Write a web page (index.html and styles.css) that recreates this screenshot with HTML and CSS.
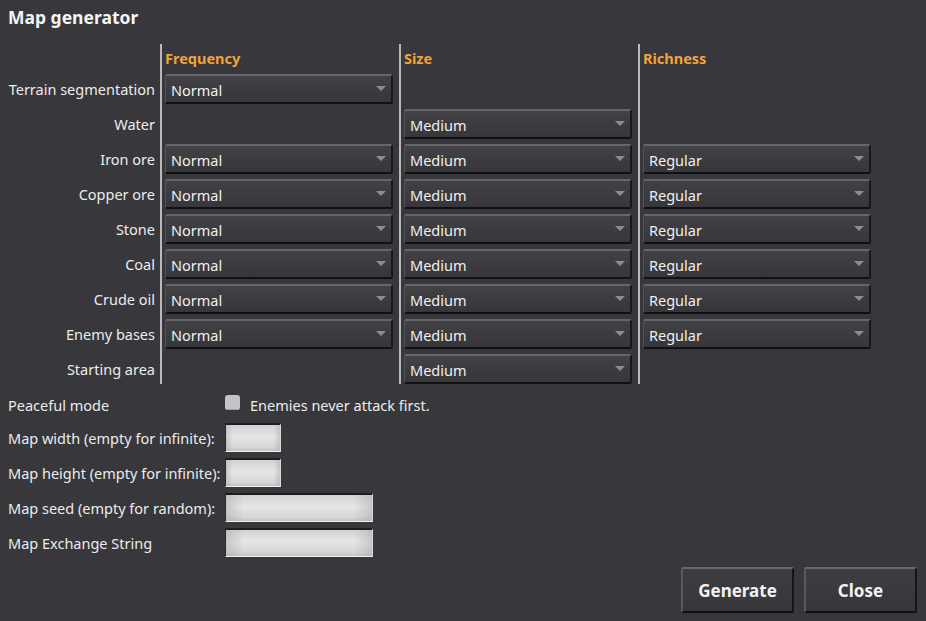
FILE: index.html
```html
<!DOCTYPE html>
<html>
<head>
<meta charset="utf-8">
<link rel="stylesheet" href="styles.css">
</head>
<body>
<div class="window">
  <h1 class="title">Map generator</h1>
  <div class="table">
    <div class="labels">
      <div class="head"></div>
      <div class="lab">Terrain segmentation</div>
      <div class="lab">Water</div>
      <div class="lab">Iron ore</div>
      <div class="lab">Copper ore</div>
      <div class="lab">Stone</div>
      <div class="lab">Coal</div>
      <div class="lab">Crude oil</div>
      <div class="lab">Enemy bases</div>
      <div class="lab">Starting area</div>
    </div>
    <div class="col">
      <div class="head">Frequency</div>
      <div class="dd">Normal</div>
      <div class="empty"></div>
      <div class="dd">Normal</div>
      <div class="dd">Normal</div>
      <div class="dd">Normal</div>
      <div class="dd">Normal</div>
      <div class="dd">Normal</div>
      <div class="dd">Normal</div>
      <div class="empty"></div>
    </div>
    <div class="col">
      <div class="head">Size</div>
      <div class="empty"></div>
      <div class="dd">Medium</div>
      <div class="dd">Medium</div>
      <div class="dd">Medium</div>
      <div class="dd">Medium</div>
      <div class="dd">Medium</div>
      <div class="dd">Medium</div>
      <div class="dd">Medium</div>
      <div class="dd">Medium</div>
    </div>
    <div class="col">
      <div class="head">Richness</div>
      <div class="empty"></div>
      <div class="empty"></div>
      <div class="dd">Regular</div>
      <div class="dd">Regular</div>
      <div class="dd">Regular</div>
      <div class="dd">Regular</div>
      <div class="dd">Regular</div>
      <div class="dd">Regular</div>
      <div class="empty"></div>
    </div>
  </div>

  <div class="form">
    <div class="flab first">Peaceful mode</div>
    <div class="check-row"><span class="checkbox"></span><span class="ctext">Enemies never attack first.</span></div>
    <div class="flab">Map width (empty for infinite):</div>
    <div><div class="input short"></div></div>
    <div class="flab">Map height (empty for infinite):</div>
    <div><div class="input short"></div></div>
    <div class="flab">Map seed (empty for random):</div>
    <div><div class="input long"></div></div>
    <div class="flab">Map Exchange String</div>
    <div><div class="input long"></div></div>
  </div>

  <div class="buttons">
    <button class="btn">Generate</button>
    <button class="btn">Close</button>
  </div>
</div>
</body>
</html>
```

FILE: styles.css
```css
html, body {
  margin: 0;
  padding: 0;
  background: #38373b;
}
body {
  font-family: "Noto Sans", "Open Sans", sans-serif;
  font-size: 14.5px;
  color: #ececec;
  width: 926px;
  height: 621px;
  overflow: hidden;
}
.window {
  height: 621px;
  display: flex;
  flex-direction: column;
  box-sizing: border-box;
}
.title {
  margin: 0;
  padding: 5px 0 0 8px;
  height: 44px;
  box-sizing: border-box;
  font-size: 17.5px;
  font-weight: 700;
  color: #f4f4f4;
  line-height: 24px;
}
.table {
  display: flex;
  height: 340px;
}
.labels {
  width: 160px;
  display: flex;
  flex-direction: column;
  gap: 5px;
}
.lab {
  height: 30px;
  line-height: 30px;
  text-align: right;
  padding-right: 5px;
  white-space: nowrap;
}
.head {
  height: 25px;
  line-height: 29px;
  font-weight: 700;
  font-size: 14.5px;
  color: #f2a338;
}
.col {
  width: 234px;
  border-left: 2px solid #b9b8bb;
  padding-left: 3px;
  display: flex;
  flex-direction: column;
  gap: 5px;
}
.empty {
  height: 30px;
}
.dd {
  position: relative;
  width: 228px;
  height: 30px;
  box-sizing: border-box;
  line-height: 28px;
  padding-left: 5px;
  background: linear-gradient(#424145, #3b3a3e 60%, #37363a);
  border-top: 2px solid #666569;
  border-left: 1px solid #545357;
  border-right: 2px solid #18171a;
  border-bottom: 2px solid #111012;
  border-radius: 2px;
  color: #f0f0f0;
  white-space: nowrap;
}
.dd::after {
  content: "";
  position: absolute;
  right: 5px;
  top: 10px;
  border-left: 5px solid transparent;
  border-right: 5px solid transparent;
  border-top: 5px solid #8d8c90;
}
.form {
  margin-top: 5px;
  padding-left: 8px;
  display: grid;
  grid-template-columns: 217px 1fr;
  grid-template-rows: 28px 29px 29px 29px 29px;
  row-gap: 6px;
  align-items: center;
}
.flab {
  white-space: nowrap;
  line-height: 20px;
}
.flab.first {
  position: relative;
  top: 2px;
}
.check-row {
  display: flex;
  align-items: center;
  gap: 10px;
}
.ctext {
  position: relative;
  top: 2px;
}
.checkbox {
  width: 15px;
  height: 15px;
  border-radius: 3px;
  background: #c4c4c6;
  box-shadow: inset 0 -1px 0 #a8a8aa;
  position: relative;
  top: -1px;
}
.input {
  height: 29px;
  box-sizing: border-box;
  border-top: 2px solid #1d1c1f;
  border-left: 1px solid #2a292c;
  border-bottom: 1px solid #f0f0f0;
  border-right: 1px solid #d8d8d8;
  background:
    linear-gradient(to right, rgba(170,170,170,0.5), rgba(255,255,255,0) 12%, rgba(255,255,255,0) 88%, rgba(170,170,170,0.5)),
    linear-gradient(#d2d2d2, #e6e6e6 45%, #d6d6d6 85%, #c4c4c4);
}
.short { width: 56px; }
.long { width: 148px; }
.buttons {
  margin-top: auto;
  display: flex;
  justify-content: flex-end;
  gap: 10px;
  padding: 0 9px 8px 0;
}
.btn {
  width: 113px;
  height: 46px;
  box-sizing: border-box;
  font-family: "Noto Sans", sans-serif;
  font-size: 17px;
  font-weight: 700;
  color: #f2f2f2;
  background: linear-gradient(#3e3d41, #37363a);
  border-top: 2px solid #6a696d;
  border-left: 2px solid #5a595d;
  border-right: 2px solid #161518;
  border-bottom: 2px solid #0f0e10;
  border-radius: 2px;
  padding: 0;
}
```
